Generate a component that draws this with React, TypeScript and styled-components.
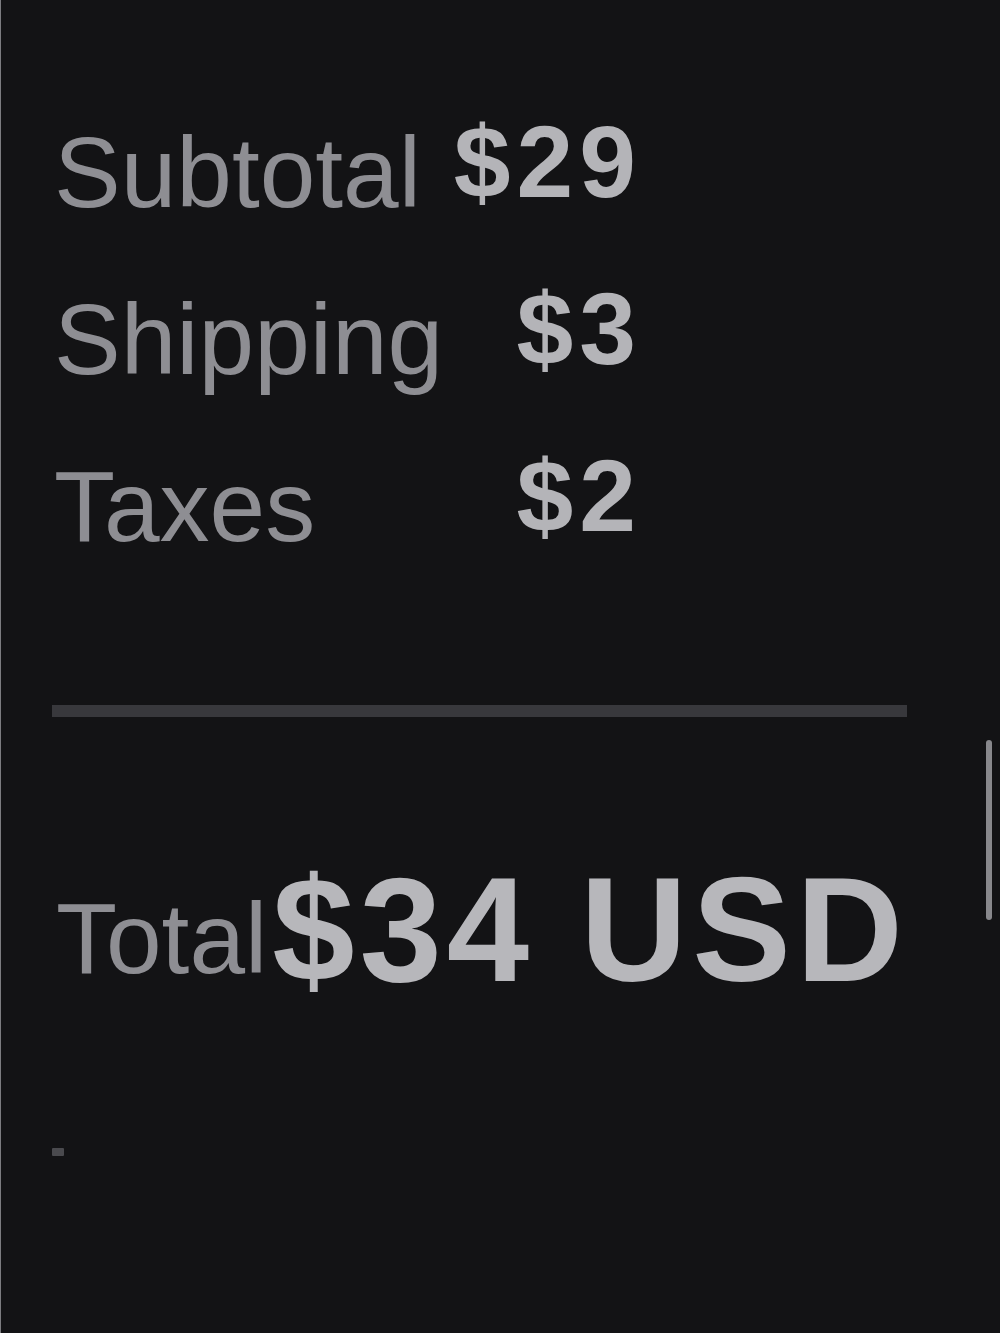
import React from "react";
import styled, { createGlobalStyle } from "styled-components";

const Global = createGlobalStyle`
  html, body {
    margin: 0;
    padding: 0;
    background: #131315;
  }
  body {
    font-family: "Liberation Sans", Arial, sans-serif;
  }
`;

const Page = styled.main`
  position: relative;
  box-sizing: border-box;
  width: 1000px;
  height: 1333px;
  overflow: hidden;
  background: #131315;
  border-left: 1px solid #7c7c80;
  padding: 112px 0 0 51px;
  display: flex;
  flex-direction: column;
  align-items: flex-start;
`;

const Summary = styled.dl`
  margin: 0;
  padding-left: 2px;
  width: 588px;
  display: grid;
  grid-template-columns: auto 1fr;
  row-gap: 57px;
  align-items: end;
`;

const Label = styled.dt`
  margin: 0;
  font-size: 100px;
  line-height: 100px;
  color: #8e8e93;
  font-weight: 400;
`;

const Value = styled.dd`
  margin: 0;
  justify-self: end;
  padding-bottom: 10px;
  font-size: 102px;
  line-height: 100px;
  font-weight: 700;
  letter-spacing: 6px;
  color: #b4b4b8;
`;

const Divider = styled.hr`
  margin: 149px 0 0 0;
  border: none;
  width: 855px;
  height: 12px;
  background: #38383c;
`;

const TotalRow = styled.div`
  margin-top: 139px;
  display: flex;
  align-items: flex-end;
  gap: 5px;
  padding-left: 4px;
`;

const TotalLabel = styled.span`
  font-size: 100px;
  line-height: 131px;
  color: #8e8e93;
`;

const TotalAmount = styled.span`
  font-size: 148px;
  line-height: 148px;
  font-weight: 700;
  letter-spacing: 5px;
  color: #b7b7bb;
`;

const Stub = styled.div`
  margin-top: 144px;
  width: 12px;
  height: 8px;
  border-radius: 1px;
  background: #4a4a4e;
`;

const ScrollThumb = styled.div`
  position: absolute;
  left: 985px;
  top: 740px;
  width: 6px;
  height: 180px;
  border-radius: 3px;
  background: #88888c;
`;

const rows = [
  { label: "Subtotal", value: "$29" },
  { label: "Shipping", value: "$3" },
  { label: "Taxes", value: "$2" },
];

export default function App() {
  return (
    <>
      <Global />
      <Page>
        <Summary>
          {rows.map((r) => (
            <React.Fragment key={r.label}>
              <Label>{r.label}</Label>
              <Value>{r.value}</Value>
            </React.Fragment>
          ))}
        </Summary>
        <Divider />
        <TotalRow>
          <TotalLabel>Total</TotalLabel>
          <TotalAmount>$34 USD</TotalAmount>
        </TotalRow>
        <Stub />
        <ScrollThumb />
      </Page>
    </>
  );
}
